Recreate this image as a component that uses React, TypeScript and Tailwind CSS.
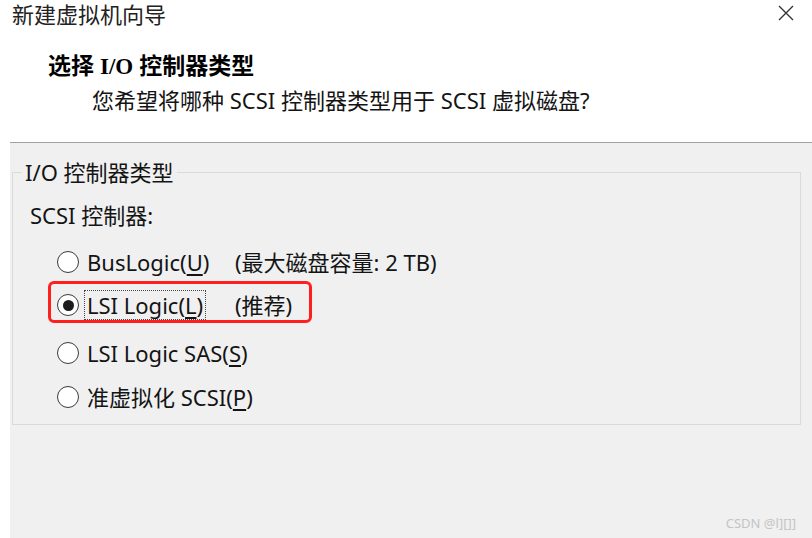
import React from 'react'

type Option = {
  label: string
  hotkey: string
  note?: string
  checked?: boolean
  highlight?: boolean
  gap: string
}

const options: Option[] = [
  { label: 'BusLogic(', hotkey: 'U', note: '(最大磁盘容量: 2 TB)', gap: 'mt-[21px]' },
  { label: 'LSI Logic(', hotkey: 'L', note: '(推荐)', checked: true, highlight: true, gap: 'mt-[17px]' },
  { label: 'LSI Logic SAS(', hotkey: 'S', gap: 'mt-[22px]' },
  { label: '准虚拟化 SCSI(', hotkey: 'P', gap: 'mt-[18px]' },
]

const Radio = ({ checked }: { checked?: boolean }) => (
  <span className="flex h-[22px] w-[22px] shrink-0 items-center justify-center rounded-full border-[1.5px] border-[#3a3a3a] bg-white">
    {checked && <span className="h-[11px] w-[11px] rounded-full bg-[#1c1c1c]" />}
  </span>
)

const OptionRow = ({ option }: { option: Option }) => (
  <div className={`relative flex h-[26px] items-center whitespace-nowrap ${option.gap}`}>
    {option.highlight && (
      <span className="pointer-events-none absolute top-[-11px] left-[-9px] h-[42px] w-[264px] rounded-[6px] border-[3px] border-[#ff1f1f]" />
    )}
    <Radio checked={option.checked} />
    <div className="ml-[6px] min-w-[150px] shrink-0">
      <span
        className={`inline-block px-[2px] leading-[28px] ${
          option.checked ? 'outline outline-1 outline-dotted outline-[#444]' : ''
        }`}
      >
        {option.label}
        <span className="underline underline-offset-[3px]">{option.hotkey}</span>)
      </span>
    </div>
    {option.note && <span>{option.note}</span>}
  </div>
)

export default function App() {
  return (
    <div
      className="relative flex h-[538px] w-[812px] flex-col overflow-hidden bg-white text-[22px] text-[#141414]"
      style={{ fontFamily: '"Noto Sans", "Noto Sans CJK SC", sans-serif' }}
    >
      {/* header */}
      <div className="h-[142px] shrink-0">
        <div className="flex h-[28px] items-center justify-between pr-[18px] pl-[12px]">
          <span className="leading-[28px] text-[#222]">新建虚拟机向导</span>
          <svg width="16" height="16" viewBox="0 0 16 16" className="mt-[-3px]">
            <path d="M1 1 L15 15 M15 1 L1 15" stroke="#333" strokeWidth="1.4" fill="none" />
          </svg>
        </div>
        <div className="mt-[24px] pl-[48px] text-[23px] leading-[26px] font-bold text-black">
          选择 <span style={{ fontFamily: '"Liberation Serif", serif' }}>I/O</span> 控制器类型
        </div>
        <div className="mt-[7px] pl-[92px] leading-[26px]">您希望将哪种 SCSI 控制器类型用于 SCSI 虚拟磁盘?</div>
      </div>

      {/* body */}
      <div className="ml-[10px] flex-1 border-t border-[#a0a0a0] bg-[#f0f0f0] pt-[16px]">
        <fieldset className="ml-[2px] h-[266px] w-[789px] border border-[#dadada]">
          <legend className="ml-[9px] px-[3px] leading-[26px]">I/O 控制器类型</legend>
          <div className="mt-[17px] pl-[17px] leading-[26px]">SCSI 控制器:</div>
          <div className="flex flex-col pl-[44px]">
            {options.map((option) => (
              <OptionRow key={option.hotkey} option={option} />
            ))}
          </div>
        </fieldset>
      </div>

      <span className="absolute right-[16px] bottom-[5px] text-[13px] text-[#c4c4c4]">CSDN @l][]]</span>
    </div>
  )
}
